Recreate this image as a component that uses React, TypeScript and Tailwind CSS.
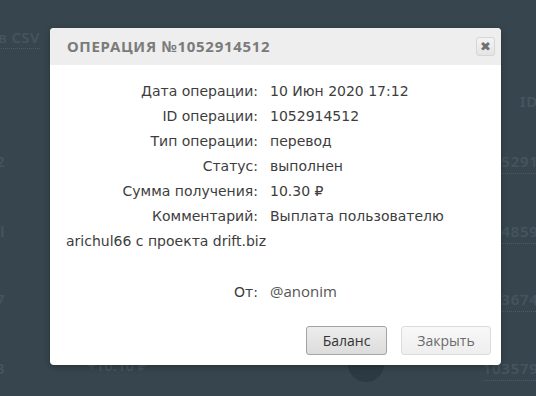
import React from "react";

const ROWS: { label: string; value: string }[] = [
  { label: "Дата операции:", value: "10 Июн 2020 17:12" },
  { label: "ID операции:", value: "1052914512" },
  { label: "Тип операции:", value: "перевод" },
  { label: "Статус:", value: "выполнен" },
  { label: "Сумма получения:", value: "10.30 ₽" },
];

// Строки страницы за затемнением: слева обрезанный текст, справа номера операций.
const BG_ROWS = [
  { h: "h-[70px]", left: "2", right: "1052914512" },
  { h: "h-[68px]", left: "ll", right: "1048591224" },
  { h: "h-[69px]", left: "7", right: "1036741189" },
  { h: "h-[40px]", left: "3", right: "1035791002" },
];

const labelCls = "inline-block w-[204px] pr-[12px] text-right";

export default function App() {
  return (
    <div className="relative h-[396px] w-[536px] overflow-hidden bg-[#37464e] font-['DejaVu_Sans',sans-serif]">
      {/* Фон страницы */}
      <div className="flex flex-col pt-[26px] font-['Noto_Sans',sans-serif] text-[15px] font-semibold text-[#45555e]">
        <div className="h-[64px]">
          <span className="-ml-[2px] border-b border-dotted border-[#4b5b63] pb-[1px] tracking-wide">в CSV</span>
        </div>
        <div className="flex h-[60px] justify-end">
          <span className="-mr-[2px] tracking-wider">ID</span>
        </div>
        {BG_ROWS.map((r) => (
          <div key={r.right} className={`flex ${r.h} items-start justify-between`}>
            <span className="-ml-[4px]">{r.left}</span>
            <span className="-mr-[40px] border-b border-dotted border-[#4b5b63] tracking-wider">{r.right}</span>
          </div>
        ))}
      </div>
      <div className="absolute left-[348px] top-[346px] h-[36px] w-[36px] rounded-full bg-[#2c3b43]" />
      <div className="absolute left-[87px] top-[354px] font-['Noto_Sans',sans-serif] text-[15px] font-semibold text-[#45555e]">
        +10.10 ₽
      </div>

      {/* Модальное окно */}
      <div className="absolute left-[50px] top-[28px] w-[451px] overflow-hidden rounded-[4px] bg-white shadow-[0_2px_6px_rgba(0,0,0,0.3)]">
        <div className="flex h-[37px] items-center justify-between bg-[#eeeeee] pl-[17px] pr-[6px]">
          <span className="font-['Noto_Sans',sans-serif] text-[15px] font-bold uppercase tracking-[0.7px] text-[#7b7b7b]">
            Операция №1052914512
          </span>
          <button className="flex h-[19px] w-[19px] items-center justify-center rounded-[3px] border border-[#d6d6d6] bg-gradient-to-b from-[#f4f4f4] to-[#e4e4e4] text-[13px] font-bold leading-none text-[#707070]">
            ✖
          </button>
        </div>

        <div className="px-[16px] pt-[14px] text-[14px] leading-[25px] text-[#3d3d3d]">
          {ROWS.map((r) => (
            <div key={r.label}>
              <span className={labelCls}>{r.label}</span>
              <span>{r.value}</span>
            </div>
          ))}
          <div>
            <span className={labelCls}>Комментарий:</span>
            <span>Выплата пользователю arichul66 с проекта drift.biz</span>
          </div>
          <div className="h-[25px]" />
          <div>
            <span className={labelCls}>От:</span>
            <span className="font-['Open_Sans',sans-serif] text-[15px] text-[#555]">@anonim</span>
          </div>
        </div>

        <div className="flex justify-end gap-[14px] pr-[10px] pt-[21px] pb-[10px] font-['Open_Sans',sans-serif] text-[14px]">
          <button className="h-[29px] w-[81px] rounded-[3px] border border-[#a3a3a3] bg-gradient-to-b from-[#ededed] to-[#dcdcdc] text-[#333]">
            Баланс
          </button>
          <button className="h-[29px] w-[90px] rounded-[3px] border border-[#dcdcdc] bg-gradient-to-b from-[#f8f8f8] to-[#eeeeee] text-[#6b6b6b]">
            Закрыть
          </button>
        </div>
      </div>
    </div>
  );
}
